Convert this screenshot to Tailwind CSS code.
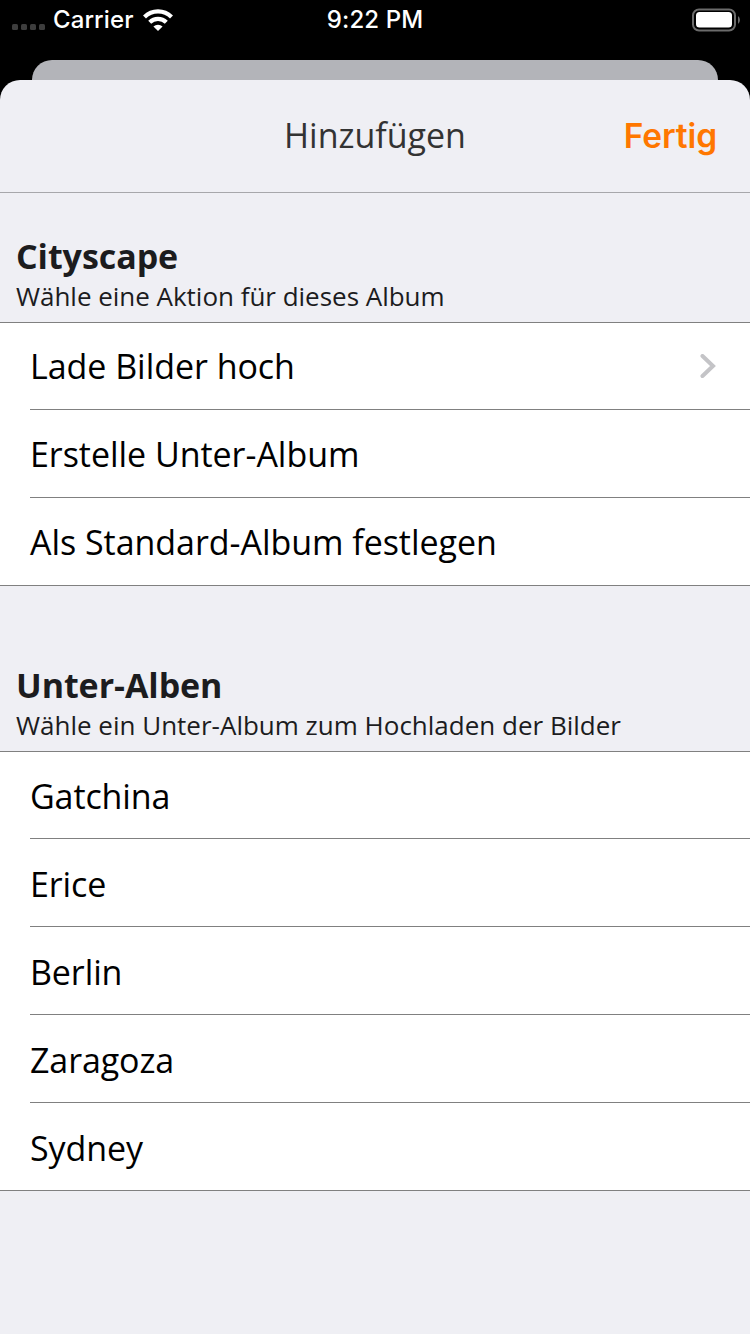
<!DOCTYPE html>
<html lang="de"><head><meta charset="utf-8"><title>Hinzufügen</title>
<script src="https://cdn.jsdelivr.net/npm/@tailwindcss/browser@4"></script></head>
<body class="bg-black">
<div class="w-[750px] h-[1334px] overflow-hidden flex flex-col font-['Open_Sans',sans-serif] text-black">
<header class="h-[60px] shrink-0 grid grid-cols-3 px-3 text-white font-['Inter',sans-serif] text-[24px] leading-[40px] font-[450]">
<div class="flex h-10 items-center"><svg class="w-[33px] h-10" viewBox="0 0 33 40" fill="#3d3d3d"><rect x="0" y="24" width="6" height="6" rx="1.5"/><rect x="9" y="24" width="6" height="6" rx="1.5"/><rect x="18" y="24" width="6" height="6" rx="1.5"/><rect x="27" y="24" width="6" height="6" rx="1.5"/></svg><span class="ml-[8px] w-[80px] text-[24px] tracking-[0.1px]">Carrier</span><svg class="ml-[10px] w-[30px] h-[22px]" viewBox="0 0 30 22" fill="none" stroke="#fff" stroke-width="4.2"><path d="M1.500 8a19.200 19.200 0 0 1 27 0M6.700 13.300a11.800 11.800 0 0 1 16.600 0"/><path d="M15 22l-4.600-4.600a7 7 0 0 1 9.200 0z" fill="#fff" stroke="none"/></svg></div>
<div class="text-center tracking-[0.1px]">9:22 PM</div>
<div class="flex h-10 items-center justify-end"><svg class="w-[48px] h-6 -mr-[2px]" viewBox="0 0 48 24"><rect x="1" y="1.500" width="42" height="21" rx="6" fill="none" stroke="#6b6b6b" stroke-width="2"/><rect x="4" y="4" width="36" height="15.500" rx="3.500" fill="#fff"/><path d="M46 8q2 1.500 2 4t-2 4z" fill="#6b6b6b"/></svg></div>
</header>
<div class="h-5 shrink-0 mx-8 rounded-t-[20px] bg-[#b3b4b9]"></div>
<main class="flex-1 bg-[#efeff4] rounded-t-[20px]">
<nav class="h-[113px] pb-[2px] border-b border-[#a7a7ab] grid grid-cols-3 items-center px-8 text-[34px]"><span></span><h1 class="text-center text-[#333]">Hinzufügen</h1><span class="text-right text-[#ff7700] font-semibold font-['Inter',sans-serif] text-[33.5px] pt-[2px] pr-px tracking-[-0.1px]">Fertig</span></nav>
<section><div class="h-[129px] pt-[40px] pl-4 text-[#1c1c1e]"><h2 class="text-[34px] leading-[46px] font-bold tracking-[-0.06px]">Cityscape</h2><p class="text-[26px] leading-[34px] tracking-[-0.02px]">Wähle eine Aktion für dieses Album</p></div>
<ul class="bg-white border-y border-[#808080] pl-[30px] text-[34px] leading-[89px] tracking-[-0.04px]"><li class="h-[87px] border-b border-[#808080] flex items-center justify-between pr-[34px]"><span>Lade Bilder hoch</span><svg class="w-4 h-6" viewBox="0 0 16 24" fill="none" stroke="#c4c4c7" stroke-width="4" stroke-linecap="round"><path d="M2.500 2l10.500 10L2.500 22"/></svg></li><li class="h-[88px] border-b border-[#808080]">Erstelle Unter-Album</li><li class="h-[87px]">Als Standard-Album festlegen</li></ul></section>
<section><div class="h-[165px] pt-[76px] pl-4 text-[#1c1c1e]"><h2 class="text-[34px] leading-[46px] font-bold tracking-[-0.06px]">Unter-Alben</h2><p class="text-[26px] leading-[34px]">Wähle ein Unter-Album zum Hochladen der Bilder</p></div>
<ul class="bg-white border-y border-[#808080] pl-[30px] text-[34px] leading-[91px] tracking-[-0.1px]"><li class="h-[87px] border-b border-[#808080] leading-[89px]">Gatchina</li><li class="h-[88px] border-b border-[#808080]">Erice</li><li class="h-[88px] border-b border-[#808080]">Berlin</li><li class="h-[88px] border-b border-[#808080]">Zaragoza</li><li class="h-[87px]">Sydney</li></ul></section>
</main></div></body></html>
